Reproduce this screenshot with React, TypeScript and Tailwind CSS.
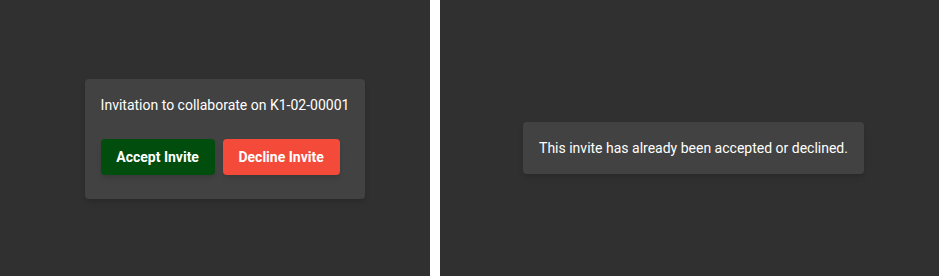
import React from "react";

const InviteCard: React.FC = () => (
  <div className="rounded bg-[#424242] px-4 pt-4 pb-6 shadow-md">
    <p className="text-sm leading-5 text-white">Invitation to collaborate on K1-02-00001</p>
    <div className="mt-6 flex gap-2">
      <button className="h-9 w-[114px] rounded bg-[#004d0e] text-sm font-bold text-white shadow-md">
        Accept Invite
      </button>
      <button className="h-9 w-[117px] rounded bg-[#f44a3a] text-sm font-bold text-white shadow-md">
        Decline Invite
      </button>
    </div>
  </div>
);

const UsedCard: React.FC = () => (
  <div className="rounded bg-[#424242] p-4 shadow-md">
    <p className="text-sm leading-5 text-white">This invite has already been accepted or declined.</p>
  </div>
);

const App: React.FC = () => {
  return (
    <div className="flex h-[276px] w-full bg-white font-['Roboto',sans-serif]">
      <div className="flex w-[430px] items-center justify-center bg-[#303030] pl-[20px] pt-[2px]">
        <InviteCard />
      </div>
      <div className="w-[10px] bg-white" />
      <div className="flex flex-1 items-center justify-center bg-[#303030] pl-[8px] pt-[20px]">
        <UsedCard />
      </div>
    </div>
  );
};

export default App;
